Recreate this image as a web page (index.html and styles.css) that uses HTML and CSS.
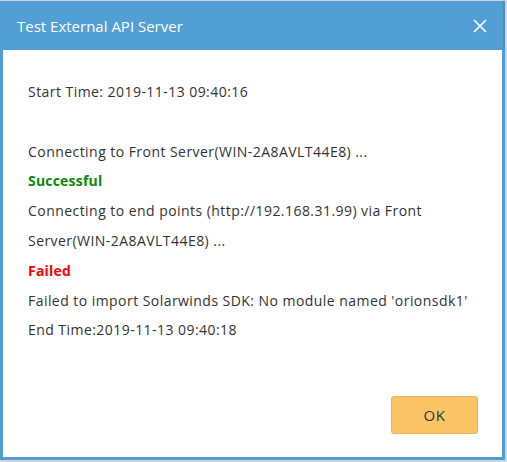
FILE: index.html
```html
<!DOCTYPE html>
<html>
<head>
<meta charset="utf-8">
<link rel="stylesheet" href="styles.css">
</head>
<body>
<div class="dialog">
  <div class="header">
    <span class="title">Test External API Server</span>
    <svg class="close" width="14" height="14" viewBox="0 0 14 14"><path d="M1 1L13 13M13 1L1 13" stroke="#fff" stroke-width="1.6" fill="none"/></svg>
  </div>
  <div class="body">
    <div class="log">
      <div class="line">Start Time: 2019-11-13 09:40:16</div>
      <div class="line blank">&nbsp;</div>
      <div class="line">Connecting to Front Server(WIN-2A8AVLT44E8) ...</div>
      <div class="line ok">Successful</div>
      <div class="line">Connecting to end points (http://192.168.31.99) via Front <span class="nw">Server(WIN-2A8AVLT44E8)</span> ...</div>
      <div class="line fail">Failed</div>
      <div class="line">Failed to import Solarwinds SDK: No module named 'orionsdk1'</div>
      <div class="line">End Time:2019-11-13 09:40:18</div>
    </div>
    <div class="footer">
      <button class="btn">OK</button>
    </div>
  </div>
</div>
</body>
</html>
```
FILE: styles.css
```css
html, body {
  margin: 0;
  padding: 0;
}
body {
  background: #d4d4d4;
  width: 507px;
  height: 462px;
  overflow: hidden;
  font-family: "Open Sans", "Liberation Sans", sans-serif;
}
.dialog {
  margin-top: 1px;
  width: 505px;
  height: 459px;
  display: flex;
  flex-direction: column;
  background: #fff;
}
.header {
  height: 49px;
  flex: none;
  background: #519fd5;
  display: flex;
  align-items: center;
  justify-content: space-between;
  padding: 0 18px 0 17px;
  box-shadow: inset -2px 0 0 #4a90c4;
}
.title {
  color: #fff;
  font-size: 15px;
  font-weight: 500;
}
.close {
  display: block;
  margin-top: 1px;
}
.body {
  flex: 1;
  display: flex;
  flex-direction: column;
  border: 3px solid #4e9dd3;
  border-top: none;
  background: #fff;
}
.log {
  flex: 1;
  padding: 27px 10px 0 25px;
  font-size: 14px;
  letter-spacing: 0.45px;
  line-height: 29.8px;
  color: #333;
}
.nw {
  white-space: nowrap;
}
.ok {
  color: #0a8a0a;
  font-weight: 700;
  letter-spacing: 0.2px;
}
.fail {
  color: #f00;
  font-weight: 700;
  letter-spacing: 0.2px;
}
.footer {
  display: flex;
  justify-content: flex-end;
  padding: 0 24px 23px 0;
}
.btn {
  width: 87px;
  height: 38px;
  background: #fbc565;
  border: 1px solid #efb451;
  border-radius: 3px;
  font-family: "Open Sans", "Liberation Sans", sans-serif;
  font-size: 15px;
  letter-spacing: 0.5px;
  color: #333;
  padding: 0;
}
```
